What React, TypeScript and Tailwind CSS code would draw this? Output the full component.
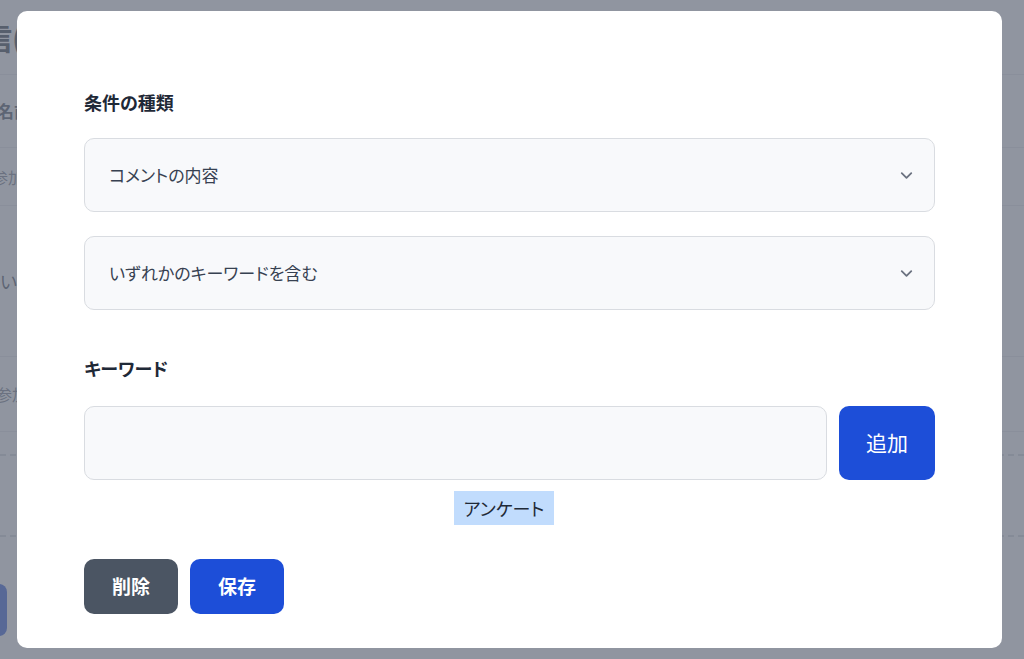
import React from 'react';
import { ChevronDown } from 'lucide-react';

const font = "font-['Noto_Sans_CJK_JP','Noto_Sans',sans-serif] [font-feature-settings:'palt']";

const SelectBox: React.FC<{ value: string }> = ({ value }) => (
  <div className="flex h-[74px] items-center justify-between rounded-[10px] border border-[#d9dce1] bg-[#f8f9fb] pl-6 pr-[18px]">
    <span className="text-[17px] text-[#374151]">{value}</span>
    <ChevronDown size={19} strokeWidth={2.3} className="text-[#6b7280]" />
  </div>
);

const App: React.FC = () => {
  return (
    <div className={`relative h-[659px] w-[1024px] overflow-hidden bg-white ${font}`}>
      {/* page behind the dialog */}
      <div className="flex flex-col text-[#1f2937]">
        <div className="flex h-[75px] items-center border-b border-gray-200 -ml-[48px]">
          <span className="text-[30px] font-bold">配信(</span>
        </div>
        <div className="flex h-[73px] items-center border-b border-gray-200 -ml-[3px]">
          <span className="text-[17px] font-semibold text-[#374151]">名前</span>
        </div>
        <div className="flex h-[58px] items-center border-b border-gray-200 -ml-[8px]">
          <span className="text-[16px] text-[#6b7280]">参加</span>
        </div>
        <div className="flex h-[151px] items-center border-b border-gray-200">
          <span className="text-[18px] text-[#374151]">い</span>
        </div>
        <div className="flex h-[75px] items-center border-b border-gray-200 -ml-[4px]">
          <span className="text-[16px] text-[#6b7280]">参加</span>
        </div>
        <div className="h-[24px] border-b-2 border-dashed border-gray-300" />
        <div className="h-[81px] border-b-2 border-dashed border-gray-300" />
        <div className="mt-[47px] h-[52px] w-[60px] -ml-[53px] rounded-lg bg-[#1d4ed8]" />
      </div>

      {/* overlay */}
      <div className="absolute inset-0 bg-[#6b7280]/75 pl-[17px] pt-[11px]">
        <div className="flex h-[637px] w-[985px] flex-col rounded-[10px] bg-white px-[67px] pt-[79px]">
          <label className="text-[18px] font-bold leading-[24px] text-[#1f2937]">条件の種類</label>
          <div className="mt-6 flex flex-col gap-6">
            <SelectBox value="コメントの内容" />
            <SelectBox value="いずれかのキーワードを含む" />
          </div>

          <label className="mt-[46px] text-[18px] font-bold leading-[24px] text-[#1f2937]">キーワード</label>
          <div className="mt-[26px] flex gap-3">
            <div className="h-[74px] flex-1 rounded-[10px] border border-[#d9dce1] bg-[#f8f9fb]" />
            <button className="h-[74px] w-[96px] rounded-[10px] bg-[#1d4ed8] text-[21px] text-white">追加</button>
          </div>
          <div className="mt-[11px] flex justify-center pr-[11px]">
            <span className="flex h-[34px] items-center bg-[#c1dcfd] px-[10px] text-[18px] text-[#1f2937]">アンケート</span>
          </div>

          <div className="mt-[34px] flex gap-3">
            <button className="h-[55px] w-[94px] rounded-[10px] bg-[#4b5563] text-[19px] font-bold text-white">削除</button>
            <button className="h-[55px] w-[94px] rounded-[10px] bg-[#1d4ed8] text-[19px] font-bold text-white">保存</button>
          </div>
        </div>
      </div>
    </div>
  );
};

export default App;
